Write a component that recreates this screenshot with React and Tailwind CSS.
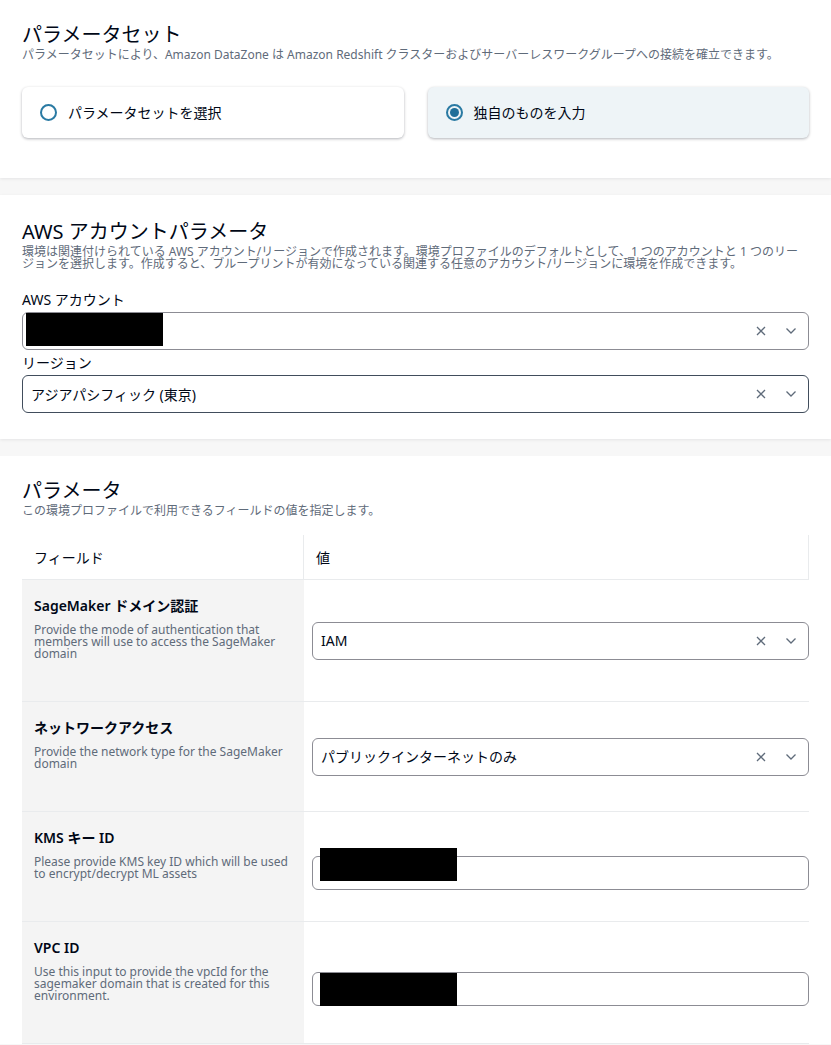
import React from 'react';

const font = { fontFamily: '"Noto Sans", "Noto Sans CJK JP", sans-serif' };

const ClearIcon = () => (
  <svg width="10" height="10" viewBox="0 0 10 10" fill="none" stroke="#5f6b7a" strokeWidth="1.3">
    <path d="M1 1l8 8M9 1l-8 8" />
  </svg>
);

const ChevronIcon = () => (
  <svg width="12" height="8" viewBox="0 0 12 8" fill="none" stroke="#5f6b7a" strokeWidth="1.3">
    <path d="M1.5 1.5l4.5 4.5 4.5-4.5" />
  </svg>
);

const Select = ({ value, redacted, dark }) => (
  <div
    className={`relative flex h-[38px] w-full items-center rounded-[6px] border bg-white pl-[8px] pr-[7px] ${
      dark ? 'border-[#414d5c]' : 'border-[#8c8c94]'
    }`}
  >
    {redacted && <div className="absolute left-[3px] top-0 h-[33px] w-[137px] bg-black" />}
    <span className="flex-1 text-[14px] text-[#000716]">{value}</span>
    <span className="flex w-[20px] justify-center">
      <ClearIcon />
    </span>
    <span className="ml-[10px] flex w-[20px] justify-center">
      <ChevronIcon />
    </span>
  </div>
);

const TextInput = ({ offset }) => (
  <div className="relative h-[34px] w-full rounded-[6px] border border-[#8c8c94] bg-white">
    <div className={`absolute left-[7px] h-[33px] w-[137px] bg-black ${offset}`} />
  </div>
);

const RadioCard = ({ label, selected }) => (
  <div
    className={`flex h-[51px] flex-1 items-center gap-[11px] rounded-[6px] px-[18px] shadow-[0_1px_3px_rgba(0,7,22,0.3)] ${
      selected ? 'bg-[#eef4f7]' : 'bg-white'
    }`}
  >
    <span className="flex h-[17px] w-[17px] items-center justify-center rounded-full border-2 border-[#2a7aa3]">
      {selected && <span className="h-[9px] w-[9px] rounded-full bg-[#1f6f99]" />}
    </span>
    <span className="text-[14px] text-[#000716]">{label}</span>
  </div>
);

const Header = ({ title, desc }) => (
  <>
    <h2 className="text-[20px] leading-[24px] text-[#000716]">{title}</h2>
    {desc}
  </>
);

const rows = [
  {
    label: 'SageMaker ドメイン認証',
    desc: 'Provide the mode of authentication that members will use to access the SageMaker domain',
    value: <Select value="IAM" />,
  },
  {
    label: 'ネットワークアクセス',
    desc: 'Provide the network type for the SageMaker domain',
    value: <Select value="パブリックインターネットのみ" />,
  },
  {
    label: 'KMS キー ID',
    desc: 'Please provide KMS key ID which will be used to encrypt/decrypt ML assets',
    value: <TextInput offset="top-[-9px]" />,
    shift: true,
  },
  {
    label: 'VPC ID',
    desc: 'Use this input to provide the vpcId for the sagemaker domain that is created for this environment.',
    value: <TextInput offset="top-0" />,
    shift: true,
  },
];

export default function App() {
  return (
    <div className="min-h-screen bg-[#f7f7f7]" style={font}>
      <section className="bg-white px-[22px] pb-[40px] pt-[23px] shadow-[0_1px_3px_rgba(0,7,22,0.08)]">
        <Header
          title="パラメータセット"
          desc={
            <p className="text-[12px] leading-[16px] text-[#5f6b7a]">
              パラメータセットにより、Amazon DataZone は Amazon Redshift クラスターおよびサーバーレスワークグループへの接続を確立できます。
            </p>
          }
        />
        <div className="mt-[24px] flex gap-[24px]">
          <RadioCard label="パラメータセットを選択" />
          <RadioCard label="独自のものを入力" selected />
        </div>
      </section>

      <section className="mt-[17px] bg-white px-[22px] pb-[26px] pt-[25px] shadow-[0_1px_3px_rgba(0,7,22,0.08)]">
        <Header
          title="AWS アカウントパラメータ"
          desc={
            <p className="mt-[2px] text-[12px] leading-[12px] text-[#5f6b7a]">
              環境は関連付けられている AWS アカウント/リージョンで作成されます。環境プロファイルのデフォルトとして、1 つのアカウントと 1 つのリージョンを選択します。作成すると、ブループリントが有効になっている関連する任意のアカウント/リージョンに環境を作成できます。
            </p>
          }
        />
        <div className="mt-[20px] text-[14px] leading-[20px] text-[#000716]">AWS アカウント</div>
        <div className="mt-[2px]">
          <Select redacted />
        </div>
        <div className="mt-[3px] text-[14px] leading-[20px] text-[#000716]">リージョン</div>
        <div className="mt-[2px]">
          <Select value="アジアパシフィック (東京)" dark />
        </div>
      </section>

      <section className="mt-[17px] bg-white px-[22px] pt-[23px]">
        <Header
          title="パラメータ"
          desc={
            <p className="text-[12px] leading-[16px] text-[#5f6b7a]">
              この環境プロファイルで利用できるフィールドの値を指定します。
            </p>
          }
        />
        <div className="mt-[16px]">
          <div className="flex h-[45px] border-b border-[#e9ebed] text-[14px] text-[#000716]">
            <div className="flex w-[282px] items-center border-r border-[#e9ebed] px-[12px]">フィールド</div>
            <div className="flex flex-1 items-center border-r border-[#e9ebed] px-[12px]">値</div>
          </div>
          {rows.map((row) => (
            <div key={row.label} className="flex border-b border-[#e9ebed]">
              <div className="w-[282px] bg-[#f4f4f4] px-[12px] pb-[41px] pt-[16px]">
                <div className="text-[14px] font-semibold leading-[20px] text-[#000716]">{row.label}</div>
                <p className="mt-[8px] text-[12px] leading-[12px] text-[#5f6b7a]">{row.desc}</p>
              </div>
              <div className={`flex flex-1 items-center pl-[8px] ${row.shift ? 'pt-[12px]' : ''}`}>{row.value}</div>
            </div>
          ))}
        </div>
      </section>
    </div>
  );
}
